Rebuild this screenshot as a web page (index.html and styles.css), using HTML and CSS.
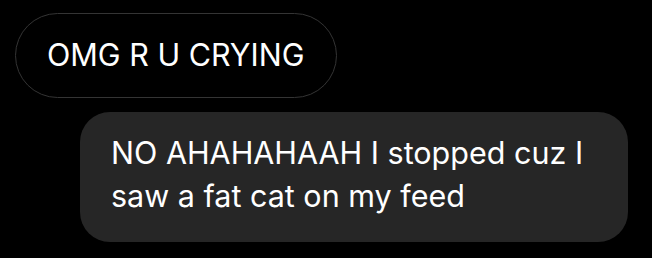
FILE: index.html
```html
<!DOCTYPE html>
<html lang="en">
<head>
    <meta charset="UTF-8">
    <title>Messages</title>
    <link rel="stylesheet" href="styles.css">
</head>
<body>
    <div class="chat">
        <div class="bubble bubble_in">
            <p class="bubble__text">OMG R U CRYING</p>
        </div>
        <div class="bubble bubble_out">
            <p class="bubble__text">NO AHAHAHAAH I stopped cuz I saw a fat cat on my feed</p>
        </div>
    </div>
</body>
</html>
```

FILE: styles.css
```css
body {
    margin: 0;
    background-color: #000000;
    font-family: 'Inter', 'Roboto', sans-serif;
    color: #ffffff;
}

.chat {
    display: flex;
    flex-direction: column;
    gap: 14px;
    padding: 13px 24px 0 15px;
}

.bubble {
    box-sizing: border-box;
}

.bubble__text {
    margin: 0;
    font-size: 30.5px;
    line-height: 43px;
}

.bubble_in {
    align-self: flex-start;
    width: 322px;
    height: 85px;
    display: flex;
    align-items: center;
    padding: 0 20px 3px 31px;
    border: 1.5px solid #343434;
    border-radius: 43px;
}

.bubble_out {
    align-self: flex-end;
    width: 548px;
    height: 130px;
    padding: 19px 20px 0 31px;
    background-color: #262626;
    border-radius: 30px;
}
```
